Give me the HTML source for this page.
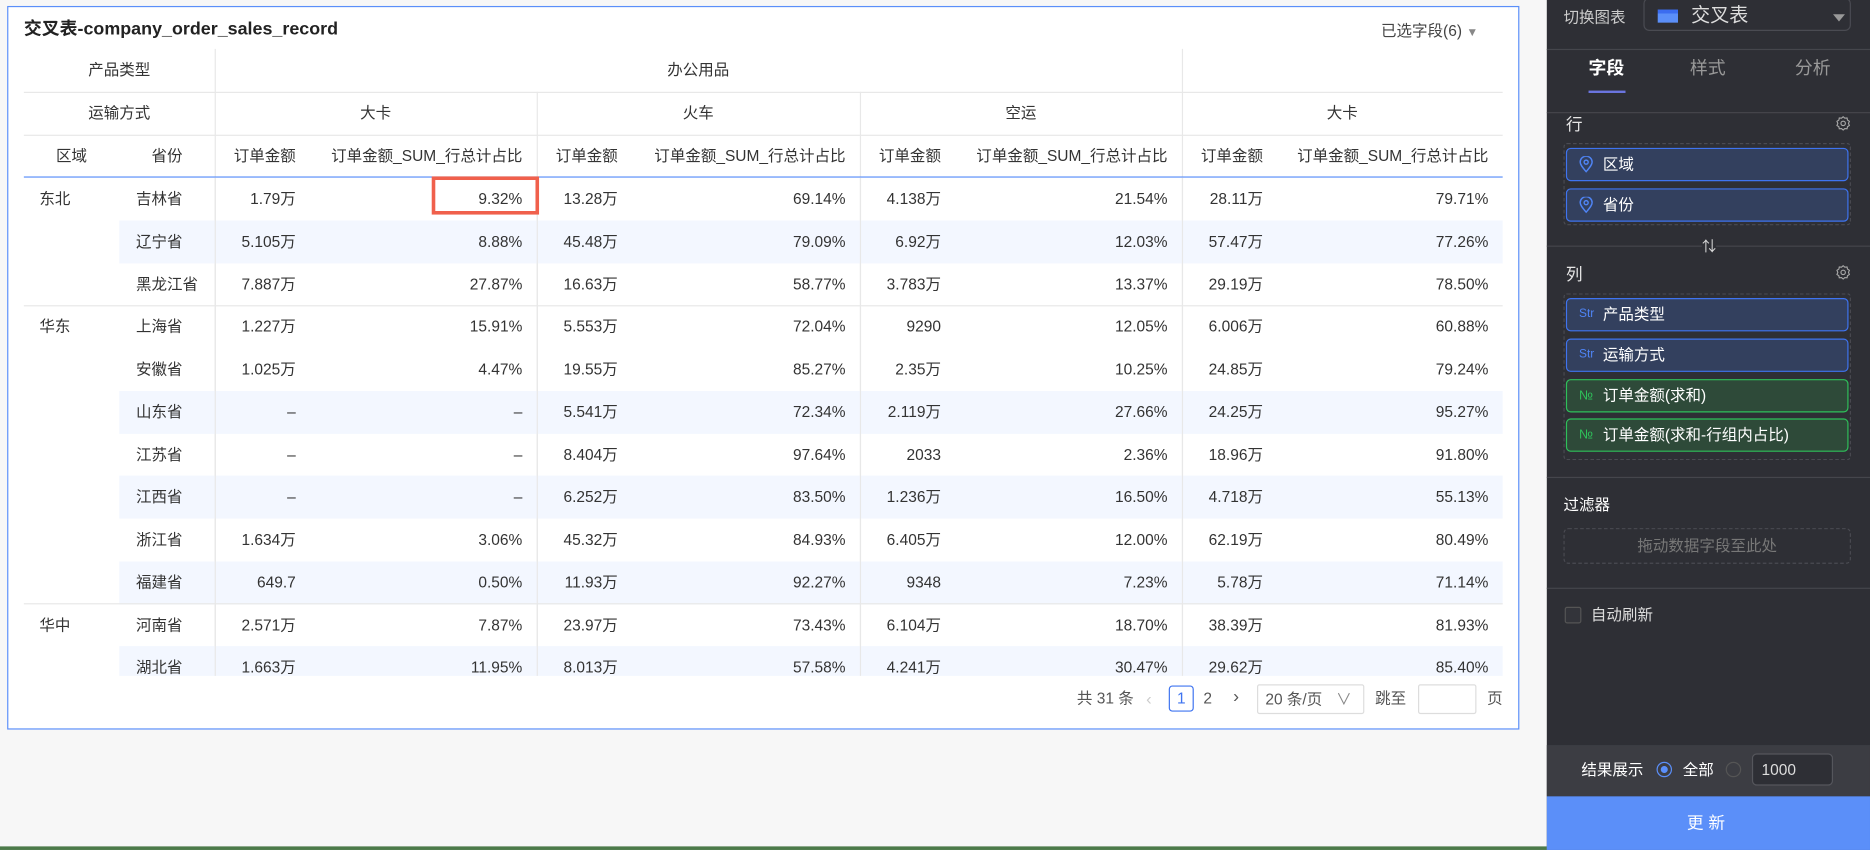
<!DOCTYPE html>
<html><head><meta charset="utf-8">
<style>
*{box-sizing:border-box;margin:0;padding:0}
html,body{width:1870px;height:850px;overflow:hidden;background:#f7f7f7;font-family:"Liberation Sans","Noto Sans CJK SC",sans-serif}
#w{position:absolute;left:0;top:0;width:1568px;height:713px;transform:scale(1.1926,1.1921);transform-origin:0 0}
.a{position:absolute}
#card{left:6px;top:5px;width:1268px;height:607px;background:#fff;border:1px solid #5b8ff9}
.t{font-size:13px;color:#333;white-space:nowrap;line-height:18px}
.vl{position:absolute;width:1px;background:#e8e8e8}
.hl{position:absolute;height:1px;background:#e8e8e8;left:20px;width:1240px}
.hc{position:absolute;font-size:13px;color:#333;text-align:center;white-space:nowrap;line-height:36px;height:36px}
#body{position:absolute;left:0;top:149px;width:1270px;height:418px;overflow:hidden}
.r{position:absolute;left:20px;width:1240px;height:35.75px;display:flex;font-size:13px;color:#333;white-space:nowrap}
.s{position:absolute;left:80px;right:0;top:0;bottom:0;background:#f3f7ff}
.r>span{position:relative;display:block;height:35.75px;line-height:35.75px}
.c0{width:80px;padding-left:13px}
.c1{width:80px;padding-left:14px}
.g1{width:80px;text-align:right;padding-right:12px}
.g2{width:190px;text-align:right;padding-right:12px}
#panel{left:1297px;top:0;width:271px;height:713px;background:#2e2f35;color:#e6e6e6}
.pt{position:absolute;font-size:13px;white-space:nowrap;line-height:18px}
.div{position:absolute;left:0;width:271px;height:1px;background:#45464c}
.item{position:absolute;left:16px;width:237px;height:28px;border-radius:4px;font-size:13px;color:#fff;display:flex;align-items:center;padding-left:10px;line-height:26px}
.bl{background:#33405e;border:1px solid #3f74f0}
.gr{background:#2e4a39;border:1px solid #2ec05a}
.ic{font-size:11px;margin-right:6px;width:14px;display:flex;align-items:center}
</style></head><body><div id="w">
<div class="a" style="left:0;top:710px;width:1297px;height:3px;background:#4c7a4a"></div>
<div class="a" id="card"></div>
<div class="a" style="left:20px;top:16px;font-size:15px;font-weight:bold;color:#222;line-height:18px">交叉表-company_order_sales_record</div>
<div class="a t" style="left:1158px;top:17px;color:#444">已选字段(6) <span style="color:#888;font-size:10px">▼</span></div>

<div class="vl" style="left:180px;top:41px;height:526px"></div>
<div class="vl" style="left:991px;top:41px;height:526px"></div>
<div class="vl" style="left:450px;top:77px;height:490px"></div>
<div class="vl" style="left:721px;top:77px;height:490px"></div>
<div class="hl" style="top:77px"></div>
<div class="hl" style="top:113px"></div>
<div class="a" style="left:20px;top:148px;width:1240px;height:1px;background:#5b8ff9"></div>

<div class="hc" style="left:20px;width:160px;top:41px">产品类型</div>
<div class="hc" style="left:180px;width:811px;top:41px">办公用品</div>
<div class="hc" style="left:20px;width:160px;top:77px">运输方式</div>
<div class="hc" style="left:180px;width:270px;top:77px">大卡</div>
<div class="hc" style="left:450px;width:271px;top:77px">火车</div>
<div class="hc" style="left:721px;width:270px;top:77px">空运</div>
<div class="hc" style="left:991px;width:269px;top:77px">大卡</div>
<div class="r" style="top:113px;height:36px"><span class="c0" style="padding:0;text-align:center">区域</span><span class="c1" style="padding:0;text-align:center">省份</span>
<span class="g1">订单金额</span><span class="g2">订单金额_SUM_行总计占比</span>
<span class="g1">订单金额</span><span class="g2" style="width:191px">订单金额_SUM_行总计占比</span>
<span class="g1">订单金额</span><span class="g2">订单金额_SUM_行总计占比</span>
<span class="g1">订单金额</span><span class="g2" style="width:189px">订单金额_SUM_行总计占比</span></div>

<div id="body">
<div class="r" style="top:0px"><span class="c0">东北</span><span class="c1">吉林省</span><span class="g1">1.79万</span><span class="g2">9.32%</span><span class="g1">13.28万</span><span class="g2" style="width:191px">69.14%</span><span class="g1">4.138万</span><span class="g2">21.54%</span><span class="g1">28.11万</span><span class="g2" style="width:189px">79.71%</span></div>
<div class="r" style="top:35.75px"><div class="s"></div><span class="c0"></span><span class="c1">辽宁省</span><span class="g1">5.105万</span><span class="g2">8.88%</span><span class="g1">45.48万</span><span class="g2" style="width:191px">79.09%</span><span class="g1">6.92万</span><span class="g2">12.03%</span><span class="g1">57.47万</span><span class="g2" style="width:189px">77.26%</span></div>
<div class="r" style="top:71.5px"><span class="c0"></span><span class="c1">黑龙江省</span><span class="g1">7.887万</span><span class="g2">27.87%</span><span class="g1">16.63万</span><span class="g2" style="width:191px">58.77%</span><span class="g1">3.783万</span><span class="g2">13.37%</span><span class="g1">29.19万</span><span class="g2" style="width:189px">78.50%</span></div>
<div class="r" style="top:107.25px"><span class="c0">华东</span><span class="c1">上海省</span><span class="g1">1.227万</span><span class="g2">15.91%</span><span class="g1">5.553万</span><span class="g2" style="width:191px">72.04%</span><span class="g1">9290</span><span class="g2">12.05%</span><span class="g1">6.006万</span><span class="g2" style="width:189px">60.88%</span></div>
<div class="r" style="top:143px"><span class="c0"></span><span class="c1">安徽省</span><span class="g1">1.025万</span><span class="g2">4.47%</span><span class="g1">19.55万</span><span class="g2" style="width:191px">85.27%</span><span class="g1">2.35万</span><span class="g2">10.25%</span><span class="g1">24.85万</span><span class="g2" style="width:189px">79.24%</span></div>
<div class="r" style="top:178.75px"><div class="s"></div><span class="c0"></span><span class="c1">山东省</span><span class="g1">–</span><span class="g2">–</span><span class="g1">5.541万</span><span class="g2" style="width:191px">72.34%</span><span class="g1">2.119万</span><span class="g2">27.66%</span><span class="g1">24.25万</span><span class="g2" style="width:189px">95.27%</span></div>
<div class="r" style="top:214.5px"><span class="c0"></span><span class="c1">江苏省</span><span class="g1">–</span><span class="g2">–</span><span class="g1">8.404万</span><span class="g2" style="width:191px">97.64%</span><span class="g1">2033</span><span class="g2">2.36%</span><span class="g1">18.96万</span><span class="g2" style="width:189px">91.80%</span></div>
<div class="r" style="top:250.25px"><div class="s"></div><span class="c0"></span><span class="c1">江西省</span><span class="g1">–</span><span class="g2">–</span><span class="g1">6.252万</span><span class="g2" style="width:191px">83.50%</span><span class="g1">1.236万</span><span class="g2">16.50%</span><span class="g1">4.718万</span><span class="g2" style="width:189px">55.13%</span></div>
<div class="r" style="top:286px"><span class="c0"></span><span class="c1">浙江省</span><span class="g1">1.634万</span><span class="g2">3.06%</span><span class="g1">45.32万</span><span class="g2" style="width:191px">84.93%</span><span class="g1">6.405万</span><span class="g2">12.00%</span><span class="g1">62.19万</span><span class="g2" style="width:189px">80.49%</span></div>
<div class="r" style="top:321.75px"><div class="s"></div><span class="c0"></span><span class="c1">福建省</span><span class="g1">649.7</span><span class="g2">0.50%</span><span class="g1">11.93万</span><span class="g2" style="width:191px">92.27%</span><span class="g1">9348</span><span class="g2">7.23%</span><span class="g1">5.78万</span><span class="g2" style="width:189px">71.14%</span></div>
<div class="r" style="top:357.5px"><span class="c0">华中</span><span class="c1">河南省</span><span class="g1">2.571万</span><span class="g2">7.87%</span><span class="g1">23.97万</span><span class="g2" style="width:191px">73.43%</span><span class="g1">6.104万</span><span class="g2">18.70%</span><span class="g1">38.39万</span><span class="g2" style="width:189px">81.93%</span></div>
<div class="r" style="top:393.25px"><div class="s"></div><span class="c0"></span><span class="c1">湖北省</span><span class="g1">1.663万</span><span class="g2">11.95%</span><span class="g1">8.013万</span><span class="g2" style="width:191px">57.58%</span><span class="g1">4.241万</span><span class="g2">30.47%</span><span class="g1">29.62万</span><span class="g2" style="width:189px">85.40%</span></div>
<div class="hl" style="top:107px"></div>
<div class="hl" style="top:357px"></div>
<div class="vl" style="left:180px;top:0;height:418px"></div>
<div class="vl" style="left:450px;top:0;height:418px"></div>
<div class="vl" style="left:721px;top:0;height:418px"></div>
<div class="vl" style="left:991px;top:0;height:418px"></div>
</div>
<div class="a" style="left:362px;top:148px;width:90px;height:32px;border:3px solid #f0604c"></div>

<div class="a t" style="left:903px;top:577px;color:#555">共 31 条</div>
<div class="a t" style="left:961px;top:577px;color:#ccc;font-size:14px">‹</div>
<div class="a t" style="left:980px;top:575px;width:21px;height:22px;border:1px solid #3f74f0;border-radius:3px;color:#3f74f0;text-align:center;line-height:20px">1</div>
<div class="a t" style="left:1009px;top:577px;color:#555">2</div>
<div class="a t" style="left:1034px;top:576px;color:#555;font-size:15px">›</div>
<div class="a t" style="left:1054px;top:574px;width:90px;height:25px;border:1px solid #ddd;border-radius:2px;line-height:23px;padding-left:6px;color:#555">20 条/页 <span style="margin-left:8px;color:#888">∨</span></div>
<div class="a t" style="left:1153px;top:577px;color:#555">跳至</div>
<div class="a" style="left:1189px;top:574px;width:49px;height:25px;border:1px solid #ddd;border-radius:2px"></div>
<div class="a t" style="left:1247px;top:577px;color:#555">页</div>

<div class="a" id="panel">
<div class="pt" style="left:14px;top:6px;color:#ccc">切换图表</div>
<div class="a" style="left:81px;top:-2px;width:174px;height:28px;border:1px solid #4a4b52;border-radius:5px"></div>
<div class="a" style="left:93px;top:8px;width:17px;height:11px;background:linear-gradient(#3b6cf0 30%,#5b8ff9 30%)"></div>
<div class="pt" style="left:121px;top:5px;font-size:16px;color:#ddd">交叉表</div>
<div class="a" style="left:240px;top:12px;width:0;height:0;border-left:5px solid transparent;border-right:5px solid transparent;border-top:6px solid #999"></div>
<div class="div" style="top:41px"></div>
<div class="pt" style="left:35px;top:49px;font-size:15px;font-weight:bold;color:#fff">字段</div>
<div class="pt" style="left:120px;top:49px;font-size:15px;color:#999">样式</div>
<div class="pt" style="left:208px;top:49px;font-size:15px;color:#999">分析</div>
<div class="a" style="left:35px;top:76px;width:31px;height:2px;background:#6b75e0"></div>
<div class="div" style="top:94px"></div>
<div class="pt" style="left:16px;top:95px;font-size:14px">行</div>
<svg class="a" style="left:242px;top:97px" width="13" height="13" viewBox="0 0 14 14"><path d="M7 1l1.5 1.3 2-.2.4 1.9 1.7 1.1-.8 1.9.8 1.9-1.7 1.1-.4 1.9-2-.2L7 13l-1.5-1.3-2 .2-.4-1.9L1.4 8.9 2.2 7l-.8-1.9 1.7-1.1.4-1.9 2 .2z" fill="none" stroke="#aaa" stroke-width="1"/><circle cx="7" cy="7" r="2" fill="none" stroke="#aaa"/></svg>
<div class="a" style="left:14px;top:120px;width:241px;height:69px;border:1px dashed #4a4b52;border-radius:3px"></div>
<div class="item bl" style="top:124px"><span class="ic"><svg width="12" height="14" viewBox="0 0 12 14"><path d="M6 13C2.5 9 1 7 1 5a5 5 0 0110 0c0 2-1.5 4-5 8z" fill="none" stroke="#4f84f5" stroke-width="1.2"/><circle cx="6" cy="5" r="1.7" fill="none" stroke="#4f84f5" stroke-width="1.2"/></svg></span>区域</div>
<div class="item bl" style="top:158px"><span class="ic"><svg width="12" height="14" viewBox="0 0 12 14"><path d="M6 13C2.5 9 1 7 1 5a5 5 0 0110 0c0 2-1.5 4-5 8z" fill="none" stroke="#4f84f5" stroke-width="1.2"/><circle cx="6" cy="5" r="1.7" fill="none" stroke="#4f84f5" stroke-width="1.2"/></svg></span>省份</div>
<div class="div" style="top:206px"></div>
<div class="pt" style="left:130px;top:198px;color:#ddd;font-size:12px;background:#2e2f35">⇅</div>
<div class="pt" style="left:16px;top:221px;font-size:14px">列</div>
<svg class="a" style="left:242px;top:222px" width="13" height="13" viewBox="0 0 14 14"><path d="M7 1l1.5 1.3 2-.2.4 1.9 1.7 1.1-.8 1.9.8 1.9-1.7 1.1-.4 1.9-2-.2L7 13l-1.5-1.3-2 .2-.4-1.9L1.4 8.9 2.2 7l-.8-1.9 1.7-1.1.4-1.9 2 .2z" fill="none" stroke="#aaa" stroke-width="1"/><circle cx="7" cy="7" r="2" fill="none" stroke="#aaa"/></svg>
<div class="a" style="left:14px;top:246px;width:241px;height:140px;border:1px dashed #4a4b52;border-radius:3px"></div>
<div class="item bl" style="top:250px"><span class="ic" style="color:#4f84f5;font-size:10px">Str</span>产品类型</div>
<div class="item bl" style="top:284px"><span class="ic" style="color:#4f84f5;font-size:10px">Str</span>运输方式</div>
<div class="item gr" style="top:318px"><span class="ic" style="color:#2ec05a">№</span>订单金额(求和)</div>
<div class="item gr" style="top:351px"><span class="ic" style="color:#2ec05a">№</span>订单金额(求和-行组内占比)</div>
<div class="div" style="top:400px"></div>
<div class="pt" style="left:14px;top:415px;font-size:13px;color:#fff">过滤器</div>
<div class="a" style="left:14px;top:443px;width:241px;height:30px;border:1px dashed #4a4b52;border-radius:4px;text-align:center;line-height:28px;font-size:13px;color:#777">拖动数据字段至此处</div>
<div class="div" style="top:493px"></div>
<div class="a" style="left:15px;top:509px;width:14px;height:14px;border:1px solid #555;border-radius:2px;background:#33343a"></div>
<div class="pt" style="left:37px;top:507px;font-size:13px;color:#ddd">自动刷新</div>
<div class="a" style="left:0;top:625px;width:271px;height:43px;background:#3c3d43"></div>
<div class="pt" style="left:29px;top:637px;font-size:13px;color:#fff">结果展示</div>
<div class="a" style="left:92px;top:639px;width:13px;height:13px;border-radius:50%;border:1px solid #5b8ff9;background:radial-gradient(#5b8ff9 35%,transparent 40%)"></div>
<div class="pt" style="left:114px;top:637px;font-size:13px;color:#fff">全部</div>
<div class="a" style="left:150px;top:639px;width:13px;height:13px;border-radius:50%;border:1px solid #555"></div>
<div class="a" style="left:172px;top:632px;width:68px;height:27px;border:1px solid #55565c;border-radius:4px;background:#2e2f35;font-size:13px;line-height:25px;padding-left:7px;color:#ddd">1000</div>
<div class="a" style="left:0;top:668px;width:271px;height:45px;background:#5b8ff9;color:#fff;text-align:center;line-height:45px;font-size:14px;letter-spacing:4px">更新</div>
</div>
</div></body></html>
